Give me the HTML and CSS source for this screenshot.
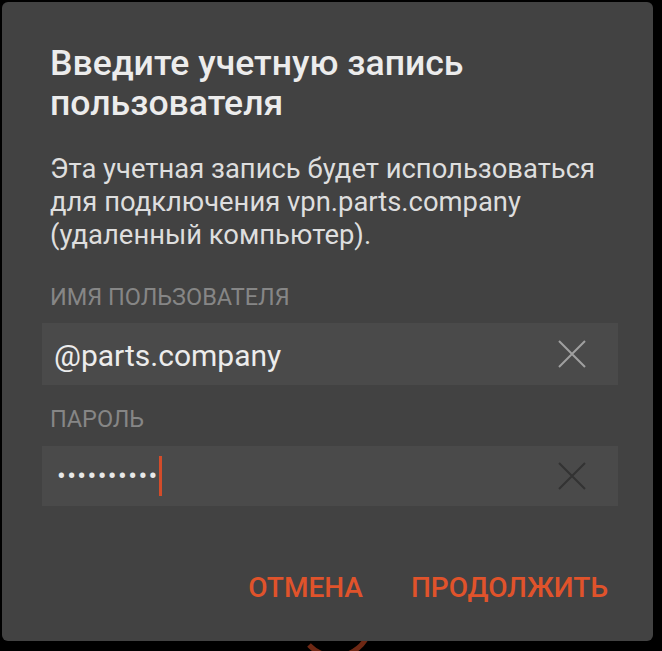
FILE: index.html
```html
<!DOCTYPE html>
<html lang="ru">
<head>
<meta charset="utf-8">
<title>Учетная запись</title>
<link rel="stylesheet" href="styles.css">
</head>
<body>
<div class="screen">
  <div class="dialog">
    <h1 class="title">Введите учетную запись пользователя</h1>
    <p class="desc">Эта учетная запись будет использоваться для подключения vpn.parts.company (удаленный компьютер).</p>
    <div class="label">ИМЯ ПОЛЬЗОВАТЕЛЯ</div>
    <div class="field">
      <span class="value">@parts.company</span>
      <svg class="clear" width="28" height="28" viewBox="0 0 28 28"><path d="M1 1 L27 27 M27 1 L1 27" stroke="currentColor" stroke-width="2" fill="none"/></svg>
    </div>
    <div class="label label-pass">ПАРОЛЬ</div>
    <div class="field field-pass">
      <span class="dots">••••••••••</span><span class="caret"></span>
      <svg class="clear clear-dim" width="28" height="28" viewBox="0 0 28 28"><path d="M1 1 L27 27 M27 1 L1 27" stroke="currentColor" stroke-width="2" fill="none"/></svg>
    </div>
    <div class="actions">
      <span class="btn">ОТМЕНА</span>
      <span class="btn">ПРОДОЛЖИТЬ</span>
    </div>
  </div>
  <svg class="spinner" width="90" height="10" viewBox="0 0 90 10"><path d="M19 4 A 36 36 0 0 0 78 -6" stroke="#6e2814" stroke-width="5" fill="none"/></svg>
</div>
</body>
</html>
```
FILE: styles.css
```css
html, body {
  margin: 0;
  padding: 0;
  background: #000;
}
body {
  font-family: Roboto, "Noto Sans", sans-serif;
}
.screen {
  position: relative;
  width: 662px;
  height: 651px;
  overflow: hidden;
}
.dialog {
  margin: 2px 0 0 2px;
  width: 651px;
  height: 639px;
  box-sizing: border-box;
  background: #424242;
  border-radius: 6px;
  padding: 41px 35px 0 40px;
  display: flex;
  flex-direction: column;
}
.title {
  margin: 0;
  padding-left: 8px;
  font-size: 35.6px;
  line-height: 40px;
  font-weight: 500;
  color: #ececec;
}
.desc {
  margin: 30px 0 0;
  padding-left: 8px;
  font-size: 27.4px;
  line-height: 33px;
  color: #dedede;
}
.label {
  margin-top: 32px;
  padding-left: 8px;
  font-size: 23.5px;
  line-height: 26px;
  color: #868686;
}
.label-pass {
  margin-top: 21px;
}
.field {
  margin-top: 13px;
  height: 62px;
  background: #4a4a4a;
  display: flex;
  align-items: center;
  padding: 0 32px 0 12px;
}
.field-pass {
  margin-top: 14px;
  height: 60px;
}
.value {
  font-size: 30px;
  padding-top: 3px;
  color: #ececec;
  flex: 1;
}
.dots {
  margin-left: 3px;
  font-size: 26px;
  letter-spacing: 1.4px;
  color: #e8e8e8;
}
.caret {
  width: 3px;
  height: 40px;
  background: #d34c2a;
  margin-left: 0;
  margin-right: auto;
}
.clear {
  color: #a0a0a0;
  flex: none;
}
.clear-dim {
  color: #333;
}
.actions {
  margin-top: auto;
  margin-bottom: 37px;
  display: flex;
  justify-content: flex-end;
  gap: 48px;
  padding-right: 10px;
}
.btn {
  font-size: 28px;
  font-weight: 500;
  color: #e0532b;
  line-height: 32px;
}
.spinner {
  position: absolute;
  left: 290px;
  top: 641px;
}
```
